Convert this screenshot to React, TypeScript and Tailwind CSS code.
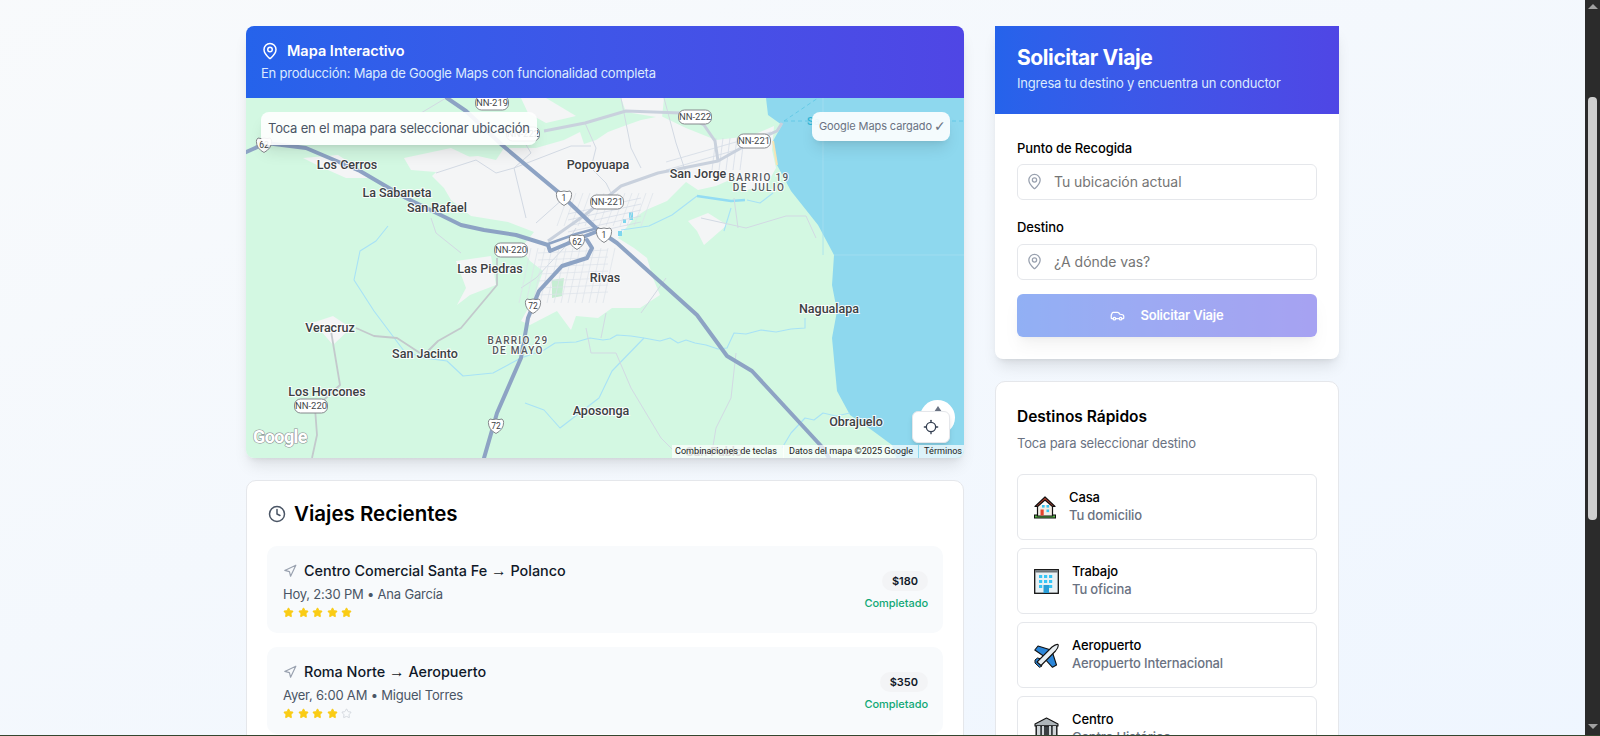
import { Car, Clock, Locate, MapPin, Navigation, Star } from "lucide-react";

const cityPolys = [
  "186,78 205,60 232,58 250,62 258,50 290,50 318,42 334,34 338,46 350,42 362,34 378,28 395,22 415,18 440,30 470,42 505,38 528,28 526,52 530,70 520,88 500,92 488,80 470,88 452,92 440,84 432,92 421,103 400,112 388,120 372,140 388,150 401,160 407,180 414,197 394,210 366,210 352,220 330,218 325,232 311,213 284,227 275,223 288,200 297,173 284,163 275,150 288,134 262,124 225,118 205,102 198,90",
  "375,0 418,0 416,20 380,14",
  "210,163 245,158 250,187 224,197 211,207 220,190",
  "60,227 87,218 105,230 87,247 75,233",
  "57,60 92,57 128,80 100,80 73,68",
  "442,123 462,115 481,127 458,147 451,133",
  "275,0 300,0 330,18 300,25 282,15",
  "158,60 205,50 226,60 190,74 165,72",
];

const minorRoads = [
  "298,33 339,25 380,13 435,15 458,27 469,43 472,63",
  "536,25 531,33 504,45 472,63 412,75 375,88 339,117 302,143",
];

const thinRoads = [
  "251,160 251,187 215,230 192,243 178,257",
  "110,230 128,238 151,240 174,255",
  "85,233 94,287 69,310 71,337 66,360",
];

const paleRoads = [
  "339,25 350,50 345,70 360,85 365,95",
  "200,0 175,15",
  "270,30 285,55 268,70 280,120",
  "190,75 230,62 250,75 268,70 325,48 345,48",
  "330,130 318,150 290,180 275,190",
  "185,120 190,135 215,155",
  "318,100 290,125",
  "375,0 385,50 395,70",
  "418,0 430,45 440,75",
  "340,230 345,255 370,255 385,290 415,340 435,360",
  "490,255 485,300 470,330 465,360",
  "455,120 500,130 540,118 560,118 570,140",
  "492,130 488,100",
  "420,180 395,215",
  "360,215 355,240",
];

const rivers = [
  "559,220 559,230 545,231 530,234 515,232 500,236 488,235 481,250 472,251 460,247 449,245 440,242 432,245 424,240 414,243 398,240 385,238 371,237 364,241 357,242 344,240 330,244 309,245 298,252 275,260 247,275 217,278 201,263 178,260 158,253 128,213 108,182 114,153 130,143 142,128",
  "501,102 514,105 527,95",
  "485,110 478,133",
  "279,305 298,312 314,330 353,300 366,273 398,240",
  "536,350 545,335 559,320 568,322 577,315 590,318 604,315",
  "375,132 403,128 426,117 451,98",
];

const labels: [string, number, number][] = [
  ["Los Cerros", 101, 71],
  ["La Sabaneta", 151, 99],
  ["San Rafael", 191, 114],
  ["Popoyuapa", 352, 71],
  ["San Jorge", 452, 80],
  ["Las Piedras", 244, 175],
  ["Rivas", 359, 184],
  ["Veracruz", 84, 234],
  ["San Jacinto", 179, 260],
  ["Nagualapa", 583, 215],
  ["Los Horcones", 81, 298],
  ["Aposonga", 355, 317],
  ["Obrajuelo", 610, 328],
];

const districts: [string, number, number][] = [
  ["BARRIO 19", 513, 83],
  ["DE JULIO", 513, 93],
  ["BARRIO 29", 272, 246],
  ["DE MAYO", 272, 256],
];

const routeShields: [string, number, number][] = [
  ["NN-219", 246, 5],
  ["NN-222", 449, 19],
  ["NN-222", 277, 36],
  ["NN-221", 508, 43],
  ["NN-221", 361, 104],
  ["NN-220", 265, 152],
  ["NN-220", 65, 308],
];

const usShields: [string, number, number][] = [
  ["62", 18, 47],
  ["1", 318, 100],
  ["1", 358, 137],
  ["62", 331, 144],
  ["72", 287, 208],
  ["72", 250, 328],
];

const trips = [
  { from: "Centro Comercial Santa Fe", to: "Polanco", meta: "Hoy, 2:30 PM • Ana García", stars: 5, price: "$180" },
  { from: "Roma Norte", to: "Aeropuerto", meta: "Ayer, 6:00 AM • Miguel Torres", stars: 4, price: "$350" },
];

function MapDrawing() {
  const gridX = [285, 292, 299, 306, 313, 320, 327, 334, 341, 348, 355, 362, 369];
  return (
    <svg viewBox="0 0 718 360" className="block h-[360px] w-[718px]">
      <rect width="718" height="360" fill="#d3f8e2" />
      {cityPolys.map((p) => (
        <polygon key={p} points={p} fill="#f4f5f6" />
      ))}
      <polygon points="306,182 318,180 316,198 306,200" fill="#c6edd3" />
      <polygon points="520,0 522,17 536,27 527,43 531,67 545,93 572,127 588,157 586,187 591,213 586,240 591,293 604,317 627,333 646,347 650,360 718,360 718,0" fill="#8ed8ee" />
      <polyline points="527,43 531,67" fill="none" stroke="#f5e5b5" strokeWidth="2" />
      <path d="M538 23L572 0M538 23H718" fill="none" stroke="#5cc6e4" strokeWidth="0.8" strokeDasharray="4 3" />
      <path d="M577 0V157M588 157H718" fill="none" stroke="#a6e0f0" strokeWidth="0.8" />
      <text x="561" y="27" fontSize="11" fill="#2fb5d6" className="font-[Roboto,sans-serif] font-medium">Sa</text>

      {rivers.map((p) => (
        <polyline key={p} points={p} fill="none" stroke="#a8e2f6" strokeWidth="1.1" strokeLinejoin="round" />
      ))}
      <polyline points="451,98 485,103 499,102" fill="none" stroke="#93dcf3" strokeWidth="2.6" strokeLinejoin="round" />
      <rect x="383" y="114" width="4" height="8" fill="#7dd6ee" />
      <rect x="372" y="133" width="4" height="5" fill="#7dd6ee" />
      <rect x="377" y="121" width="3" height="4" fill="#7dd6ee" />

      {paleRoads.map((p) => (
        <polyline key={p} points={p} fill="none" stroke="#d2d9e3" strokeWidth="1" strokeLinejoin="round" />
      ))}
      {thinRoads.map((p) => (
        <polyline key={p} points={p} fill="none" stroke="#c3c9cc" strokeWidth="1.8" strokeLinejoin="round" />
      ))}
      {gridX.map((x) => (
        <g key={x} stroke="#dde2ea" strokeWidth="0.7">
          <line x1={x} y1="150" x2={x - 12} y2="205" />
          <line x1={x + 38} y1="95" x2={x + 26} y2="128" />
        </g>
      ))}
      {[155, 162, 169, 176, 183, 190, 197].map((y) => (
        <line key={y} x1="292" y1={y} x2="362" y2={y - 3} stroke="#dde2ea" strokeWidth="0.7" />
      ))}
      {[104, 110, 116, 122, 128].map((y) => (
        <line key={y} x1="322" y1={y + 12} x2="395" y2={y - 4} stroke="#d3dae5" strokeWidth="0.7" />
      ))}
      {[470, 477, 484, 491, 498].map((x) => (
        <line key={x} x1={x} y1="40" x2={x - 4} y2="72" stroke="#d3dae5" strokeWidth="0.7" />
      ))}
      {[52, 60].map((y) => (
        <line key={y} x1="420" y1={y + 12} x2="525" y2={y - 18} stroke="#d3dae5" strokeWidth="0.8" />
      ))}
      {minorRoads.map((p) => (
        <polyline key={p} points={p} fill="none" stroke="#c9d1dd" strokeWidth="3" strokeLinejoin="round" />
      ))}

      <g fill="none" stroke="#8da3c4" strokeWidth="4" strokeLinejoin="round" strokeLinecap="round">
        <polyline points="201,0 220,13 256,47 311,93 352,132 371,145 451,217 481,258 506,273 577,350 583,360" />
        <polyline points="-4,56 20,45 60,50 114,73 160,100 215,127 238,132 270,137 302,147 304,153 330,142 352,133" />
        <polyline points="302,146 330,136 352,130" strokeWidth="2.6" />
        <polyline points="238,360 251,315 275,260 282,220 293,193 316,168 341,160 346,150 341,142" />
      </g>

      <g className="font-[Roboto,sans-serif]" textAnchor="middle">
        <text x="468" y="358" fontSize="12.5" fill="#888" className="font-medium">San Pablo</text>
        {labels.map(([name, x, y]) => (
          <text key={name} x={x} y={y} fontSize="12.5" fill="#3c4043" stroke="#fff" strokeWidth="2" strokeOpacity="0.85" className="font-medium [paint-order:stroke]">
            {name}
          </text>
        ))}
        {districts.map(([name, x, y]) => (
          <text key={name} x={x} y={y} fontSize="10" letterSpacing="1.3" fill="#55585c" stroke="#fff" strokeWidth="2" strokeOpacity="0.85" className="font-medium [paint-order:stroke]">
            {name}
          </text>
        ))}
        {routeShields.map(([name, x, y]) => (
          <g key={`${name}-${x}`}>
            <rect x={x - 16.5} y={y - 7} width="33" height="14" rx="6" fill="#fff" stroke="#85888c" strokeWidth="1" />
            <text x={x} y={y + 3.4} fontSize="9.5" fill="#44474b">{name}</text>
          </g>
        ))}
        {usShields.map(([name, x, y]) => (
          <g key={`${name}-${x}`}>
            <path d={`M${x - 6} ${y - 7}q3 1.2 6 0q3 1.2 6 0q2 2 1.6 3.5q0 7-7.6 11q-7.6-4-7.6-11q-.4-1.5 1.6-3.5z`} fill="#fff" stroke="#85888c" strokeWidth="1" />
            <text x={x} y={y + 3.2} fontSize="8.5" fill="#3c4043">{name}</text>
          </g>
        ))}
        <text x="34" y="345" fontSize="18" fontWeight="700" fill="#fff" stroke="#8b8f93" strokeWidth="1.1" className="[paint-order:stroke]" letterSpacing="-0.6">
          Google
        </text>
      </g>
    </svg>
  );
}

function HouseEmoji() {
  return (
    <svg viewBox="0 0 22 24" className="h-6 w-[22px] shrink-0">
      <rect x="0.5" y="20" width="21" height="3" fill="#5bb84a" stroke="#111" strokeWidth="1" />
      <path d="M3.5 10V21H18.5V10" fill="#f4efe6" stroke="#111" strokeWidth="1.2" />
      <path d="M1 11.5L11 2L21 11.5L18.5 11.5L11 5L3.5 11.5Z" fill="#c9432f" stroke="#111" strokeWidth="1.2" strokeLinejoin="round" />
      <rect x="6.5" y="14.5" width="3.2" height="6" fill="#e5432d" />
      <rect x="12.5" y="10" width="2.6" height="2.6" fill="#36c5f4" />
      <rect x="8" y="10" width="2.6" height="2.6" fill="#36c5f4" />
      <rect x="12.5" y="14.5" width="2.6" height="2.6" fill="#36c5f4" />
    </svg>
  );
}

function OfficeEmoji() {
  const cells = [
    [5, 6], [10, 6], [15, 6], [5, 11], [10, 11], [15, 11], [5, 16], [15, 16],
  ];
  return (
    <svg viewBox="0 0 25 25" className="h-[25px] w-[25px] shrink-0">
      <rect x="0.7" y="0.7" width="23.6" height="23.6" fill="#eaf1f4" stroke="#111" strokeWidth="1.3" />
      <rect x="1.3" y="1.3" width="22.4" height="2.2" fill="#6d7478" />
      {cells.map(([x, y]) => (
        <rect key={`${x}-${y}`} x={x} y={y} width="3.2" height="3" fill="#37c6f6" />
      ))}
      <rect x="9.5" y="16" width="5.5" height="8" fill="#2a9fd8" />
    </svg>
  );
}

function PlaneEmoji() {
  return (
    <svg viewBox="0 0 25 25" className="h-[25px] w-[25px] shrink-0">
      <path d="M0.8 7L4 3L17 7L11 14Z" fill="#2b86d9" stroke="#111" strokeWidth="1.1" strokeLinejoin="round" />
      <path d="M10 15L18 8L22.5 22L18.5 24.3Z" fill="#2b86d9" stroke="#111" strokeWidth="1.1" strokeLinejoin="round" />
      <path d="M1 17L3.5 15L7 16L5 18L8 23L5.5 24.3L1 20Z" fill="#2b86d9" stroke="#111" strokeWidth="1" strokeLinejoin="round" />
      <path d="M3 19L18 4Q22 0.8 24 1.5Q25 4 21.5 8L7 22.5Z" fill="#e8eef2" stroke="#111" strokeWidth="1.1" strokeLinejoin="round" />
    </svg>
  );
}

function BankEmoji() {
  return (
    <svg viewBox="0 0 25 25" className="h-[25px] w-[25px] shrink-0">
      <path d="M1 7L12.5 1L24 7V9H1Z" fill="#aeb5b9" stroke="#111" strokeWidth="1.1" strokeLinejoin="round" />
      <rect x="2" y="9" width="21" height="15" fill="#3a3f42" stroke="#111" strokeWidth="1" />
      <rect x="3" y="9" width="3.2" height="15" fill="#cfd4d7" />
      <rect x="18.8" y="9" width="3.2" height="15" fill="#cfd4d7" />
      <rect x="8" y="9" width="2" height="15" fill="#cfd4d7" />
      <rect x="15" y="9" width="2" height="15" fill="#cfd4d7" />
    </svg>
  );
}

const quickPlaces = [
  { icon: <HouseEmoji />, name: "Casa", note: "Tu domicilio" },
  { icon: <OfficeEmoji />, name: "Trabajo", note: "Tu oficina" },
  { icon: <PlaneEmoji />, name: "Aeropuerto", note: "Aeropuerto Internacional" },
  { icon: <BankEmoji />, name: "Centro", note: "Centro Histórico" },
];

function PlaceInput({ placeholder }: { placeholder: string }) {
  return (
    <div className="relative">
      <MapPin className="absolute left-[9px] top-[9px] h-[17px] w-[17px] text-gray-400" strokeWidth={1.8} />
      <input
        readOnly
        placeholder={placeholder}
        className="block h-9 w-full rounded-md border border-gray-200 bg-white pl-[36px] pb-[2px] text-sm tracking-[-0.05px] outline-none placeholder:text-[#757575]"
      />
    </div>
  );
}

export default function App() {
  return (
    <div className="flex h-[736px] flex-col overflow-hidden font-[Inter,sans-serif] text-black">
      <div className="flex h-[735px]">
        <main className="min-w-0 flex-1 overflow-hidden bg-gradient-to-br from-slate-50 to-blue-50 pt-[26px]">
          <div className="mx-auto grid w-[1093px] grid-cols-[718px_344px] gap-[31px]">
            <div className="flex flex-col gap-[22px]">
              <section className="relative overflow-hidden rounded-lg shadow-lg">
                <div className="h-[72px] bg-gradient-to-r from-[#2563eb] to-[#4f46e5] px-[15px] pt-[15px] text-white">
                  <div className="flex items-center gap-[8px]">
                    <MapPin className="h-[18px] w-[18px]" />
                    <h2 className="text-[14.5px] leading-[20px] font-semibold">Mapa Interactivo</h2>
                  </div>
                  <p className="mt-[2px] text-[13px] leading-[20px] tracking-[-0.23px] text-blue-100">
                    En producción: Mapa de Google Maps con funcionalidad completa
                  </p>
                </div>
                <div className="relative h-[360px]">
                  <MapDrawing />
                  <div className="absolute left-[15px] top-[14px] flex h-[33px] items-center rounded-lg bg-white/90 px-[7px] text-[13px] tracking-[-0.2px] text-gray-600 shadow-lg">
                    Toca en el mapa para seleccionar ubicación
                  </div>
                  <div className="absolute right-[14px] top-[14px] flex h-[29px] w-[138px] items-center rounded-lg bg-white/90 pl-[7px] text-[11px] tracking-[-0.1px] text-gray-500 shadow-lg">
                    <span>Google Maps cargado</span>
                    <span className="ml-[2px] font-['DejaVu_Sans',sans-serif] text-[14px]">✓</span>
                  </div>
                  <div className="absolute right-[9px] top-[302px] flex h-[35px] w-[35px] justify-center rounded-full bg-white pt-[6px]">
                    <span className="h-0 w-0 border-x-[4px] border-b-[6px] border-x-transparent border-b-gray-500" />
                  </div>
                  <button className="absolute right-[14px] top-[313px] flex h-[32px] w-[38px] items-center justify-center rounded-md border border-gray-200 bg-white shadow-md">
                    <Locate className="h-4 w-4 text-gray-700" />
                  </button>
                  <div className="absolute bottom-0 right-0 flex h-[13px] w-[292px] items-center whitespace-nowrap bg-white/70 font-[Roboto,sans-serif] text-[9.1px] text-[#222]">
                    <span className="px-[3px]">Combinaciones de teclas</span>
                    <span className="ml-[3px] border-l border-white/70 px-[5px]">Datos del mapa ©2025 Google</span>
                    <span className="border-l border-[#8ed8ee] px-[5px]">Términos</span>
                  </div>
                </div>
              </section>

              <section className="rounded-[10px] border border-gray-200 bg-white px-[20px] pt-[19px] pb-[14px]">
                <h3 className="flex items-center gap-[8px] pl-[1px] text-[20.5px] leading-[28px] font-semibold">
                  <Clock className="h-[18px] w-[18px] text-gray-600" />
                  Viajes Recientes
                </h3>
                <div className="mt-[18px] flex flex-col gap-[14px]">
                  {trips.map((trip) => (
                    <div key={trip.from} className="flex h-[87px] items-start justify-between rounded-[10px] bg-[#f8fafc] pl-[16px] pr-[15px] pt-[15px]">
                      <div>
                        <div className="flex items-center gap-[7px] text-[14.4px] leading-[20px] font-medium text-gray-900">
                          <Navigation className="h-[14px] w-[14px] text-gray-400" />
                          <span>
                            {trip.from}{" "}
                            <span className="font-['Liberation_Sans',sans-serif] text-[15.5px] leading-none font-normal">→</span> {trip.to}
                          </span>
                        </div>
                        <p className="mt-[4px] text-[13px] leading-[18px] tracking-[-0.2px] text-gray-600">{trip.meta}</p>
                        <div className="mt-[4px] flex gap-[3.5px]">
                          {[1, 2, 3, 4, 5].map((n) =>
                            n <= trip.stars ? (
                              <Star key={n} className="h-[11px] w-[11px] fill-[#facc15] text-[#facc15]" />
                            ) : (
                              <Star key={n} className="h-[11px] w-[11px] text-gray-300" />
                            ),
                          )}
                        </div>
                      </div>
                      <div className="flex flex-col items-end gap-[4px] pt-[10px]">
                        <span className="flex h-5 items-center rounded-full bg-gray-100 px-[10px] text-[11px] font-semibold text-gray-900">
                          {trip.price}
                        </span>
                        <span className="text-[11px] leading-[16px] font-medium tracking-[-0.05px] text-[#10a875]">Completado</span>
                      </div>
                    </div>
                  ))}
                </div>
              </section>
            </div>

            <div className="flex flex-col gap-[22px]">
              <section className="overflow-hidden rounded-b-lg bg-white shadow-lg">
                <div className="h-[88px] bg-gradient-to-r from-[#2563eb] to-[#4f46e5] px-[22px] pt-[18px] text-white">
                  <h1 className="text-[21px] leading-[28px] font-bold tracking-[-0.4px]">Solicitar Viaje</h1>
                  <p className="mt-[1px] text-[13px] leading-[20px] tracking-[-0.2px] text-blue-100">Ingresa tu destino y encuentra un conductor</p>
                </div>
                <div className="px-[22px] pt-[24px] pb-[22px]">
                  <label className="block text-[13px] leading-[20px] font-medium tracking-[-0.1px]">Punto de Recogida</label>
                  <div className="mt-[6px]">
                    <PlaceInput placeholder="Tu ubicación actual" />
                  </div>
                  <label className="mt-[17px] block text-[13px] leading-[20px] font-medium tracking-[-0.1px]">Destino</label>
                  <div className="mt-[7px]">
                    <PlaceInput placeholder="¿A dónde vas?" />
                  </div>
                  <button className="mt-[14px] flex h-[43px] w-full items-center justify-center gap-[15px] rounded-md bg-gradient-to-r from-[#2563eb] to-[#4f46e5] text-[13px] font-semibold tracking-[-0.2px] text-white opacity-50 shadow-lg">
                    <Car className="h-[15px] w-[15px]" />
                    Solicitar Viaje
                  </button>
                </div>
              </section>

              <section className="rounded-[10px] border border-gray-200 bg-white px-[21px] pt-[23px]">
                <h3 className="text-[15.5px] leading-[24px] font-semibold">Destinos Rápidos</h3>
                <p className="mt-[4px] text-[13px] leading-[20px] tracking-[-0.2px] text-gray-500">Toca para seleccionar destino</p>
                <div className="mt-[21px] flex flex-col gap-[8px]">
                  {quickPlaces.map((place) => (
                    <div key={place.name} className="flex h-[66px] items-center gap-[13px] rounded-md border border-gray-200 bg-white px-[16px]">
                      {place.icon}
                      <div className="pb-[3px]">
                        <div className="text-[13px] leading-[18px] font-medium tracking-[-0.1px]">{place.name}</div>
                        <div className="text-[13px] leading-[18px] font-medium tracking-[-0.15px] text-gray-500">{place.note}</div>
                      </div>
                    </div>
                  ))}
                </div>
              </section>
            </div>
          </div>
        </main>

        <div className="flex w-[15px] shrink-0 flex-col items-center bg-[#2b2b2b] pt-[4px] pb-[6px]">
          <span className="h-0 w-0 border-x-[5px] border-b-[5px] border-x-transparent border-b-[#a0a0a0]" />
          <span className="mt-[88px] h-[423px] w-[9px] rounded-[4px] bg-[#cfcfcf]" />
          <span className="mt-auto h-0 w-0 border-x-[5px] border-t-[5px] border-x-transparent border-t-[#a0a0a0]" />
        </div>
      </div>
      <div className="h-px bg-[#35452f]" />
    </div>
  );
}
